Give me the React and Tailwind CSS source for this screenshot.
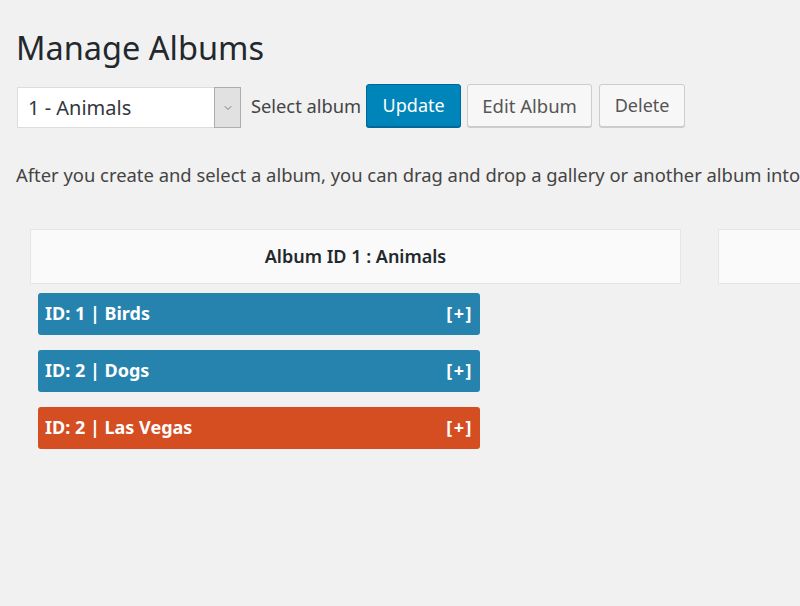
import { ChevronDown } from 'lucide-react';

const items = [
    { id: 1, name: 'Birds', color: 'bg-[#2683ae]' },
    { id: 2, name: 'Dogs', color: 'bg-[#2683ae]' },
    { id: 2, name: 'Las Vegas', color: 'bg-[#d54e21]' },
];

export default function App() {
    return (
        <div className="h-[606px] w-[800px] overflow-hidden bg-[#f1f1f1] font-['Noto_Sans',sans-serif] text-[#23282d]">
            <div className="w-[1400px] pl-[16px] pt-[26px]">
                <h1 className="text-[32.5px] leading-[44px] font-normal text-[#23282d]">Manage Albums</h1>

                {/* toolbar */}
                <div className="mt-[14px] flex items-start">
                    <div className="mt-[3px] ml-[1px] flex h-[41px] w-[224px] border border-[#dddddd] bg-white">
                        <div className="flex flex-1 items-center pl-[10px] text-[20px] text-[#32373c]">1 - Animals</div>
                        <div className="-my-px -mr-px flex w-[27px] items-center justify-center border border-[#adadad] bg-[#e1e1e1]">
                            <ChevronDown className="h-3 w-3 text-[#444]" strokeWidth={1.25} />
                        </div>
                    </div>
                    <span className="ml-[10px] self-center text-[18.3px] text-[#444]">Select album</span>
                    <button className="ml-[5px] h-[43px] w-[95px] rounded-[3px] border border-[#006799] bg-[#0085ba] text-[18px] text-white shadow-[0_1px_0_#006799]">
                        Update
                    </button>
                    <button className="ml-[6px] h-[43px] w-[125px] rounded-[3px] border border-[#cccccc] bg-[#f7f7f7] text-[18.5px] text-[#555] shadow-[0_1px_0_#cccccc]">
                        Edit Album
                    </button>
                    <button className="ml-[7px] h-[43px] w-[86px] rounded-[3px] border border-[#cccccc] bg-[#f7f7f7] text-[18px] text-[#555] shadow-[0_1px_0_#cccccc]">
                        Delete
                    </button>
                </div>

                <p className="mt-[33px] whitespace-nowrap text-[18.4px] text-[#444]">
                    After you create and select a album, you can drag and drop a gallery or another album into your album.
                </p>

                {/* album columns */}
                <div className="mt-[40px] ml-[14px] flex gap-[37px]">
                    <div className="w-[651px]">
                        <div className="flex h-[55px] items-center justify-center border border-[#e5e5e5] bg-[#fafafa] text-[18px] font-semibold text-[#23282d]">
                            Album ID 1 : Animals
                        </div>
                        <div className="mt-[9px] ml-[8px] flex w-[442px] flex-col gap-[15px]">
                            {items.map((it, i) => (
                                <div
                                    key={i}
                                    className={`flex h-[42px] items-center justify-between rounded-[3px] px-[7px] text-[18px] font-bold text-white ${it.color}`}
                                >
                                    <span>ID: {it.id} | {it.name}</span>
                                    <span className="tracking-[1.5px]">[+]</span>
                                </div>
                            ))}
                        </div>
                    </div>
                    <div className="w-[651px]">
                        <div className="h-[55px] border border-[#e5e5e5] bg-[#fafafa]"></div>
                    </div>
                </div>
            </div>
        </div>
    );
}
